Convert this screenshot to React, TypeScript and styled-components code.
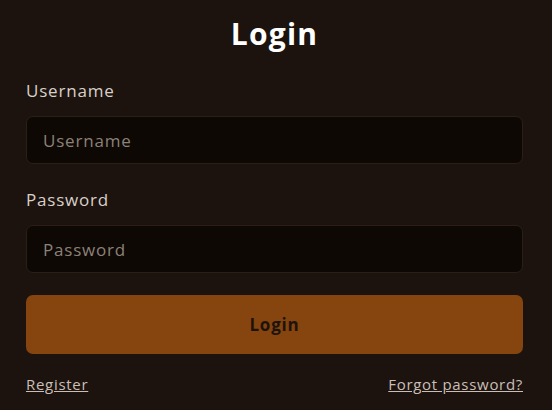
import React from "react";
import styled, { createGlobalStyle } from "styled-components";

const GlobalStyle = createGlobalStyle`
    html, body {
        margin: 0;
        padding: 0;
        background: #1c130e;
    }
    body {
        font-family: "Open Sans", "Liberation Sans", sans-serif;
    }
`;

const LoginContainer = styled.div`
    width: 552px;
    height: 410px;
    box-sizing: border-box;
    padding: 13px 29px 0 26px;
    display: flex;
    flex-direction: column;
    background: #1c130e;
`;

const LoginHeader = styled.h1`
    margin: 0 0 24px;
    text-align: center;
    font-size: 30px;
    line-height: 42px;
    font-weight: 700;
    letter-spacing: 1.2px;
    color: #ffffff;
`;

const Field = styled.div`
    display: flex;
    flex-direction: column;
    gap: 13px;
    margin-bottom: 24px;
`;

const Label = styled.label`
    font-size: 17px;
    line-height: 24px;
    letter-spacing: 0.8px;
    color: #d9d0c9;
`;

const Input = styled.input`
    height: 48px;
    box-sizing: border-box;
    padding: 0 16px;
    border: 1px solid #2b1f15;
    border-radius: 7px;
    background: #0d0804;
    color: #d9d0c9;
    font-family: inherit;
    font-size: 17px;
    letter-spacing: 0.8px;
    outline: none;

    &::placeholder {
        color: #8c8178;
    }
`;

const SubmitButton = styled.button`
    height: 59px;
    margin-top: -2px;
    border: 0;
    border-radius: 7px;
    background: #86450f;
    color: #1e130b;
    font-family: inherit;
    font-size: 17px;
    font-weight: 700;
    letter-spacing: 0.8px;
    cursor: pointer;
`;

const LinksRow = styled.div`
    display: flex;
    justify-content: space-between;
    margin-top: 20px;
`;

const TextLink = styled.a`
    font-size: 15px;
    line-height: 20px;
    letter-spacing: 0.7px;
    color: #c9bfb7;
    text-decoration: underline;
    cursor: pointer;
`;

export default function App() {
    return (
        <>
            <GlobalStyle />
            <LoginContainer>
                <LoginHeader>Login</LoginHeader>
                <Field>
                    <Label htmlFor="username">Username</Label>
                    <Input id="username" placeholder="Username" />
                </Field>
                <Field>
                    <Label htmlFor="password">Password</Label>
                    <Input id="password" type="password" placeholder="Password" />
                </Field>
                <SubmitButton>Login</SubmitButton>
                <LinksRow>
                    <TextLink>Register</TextLink>
                    <TextLink>Forgot password?</TextLink>
                </LinksRow>
            </LoginContainer>
        </>
    );
}
